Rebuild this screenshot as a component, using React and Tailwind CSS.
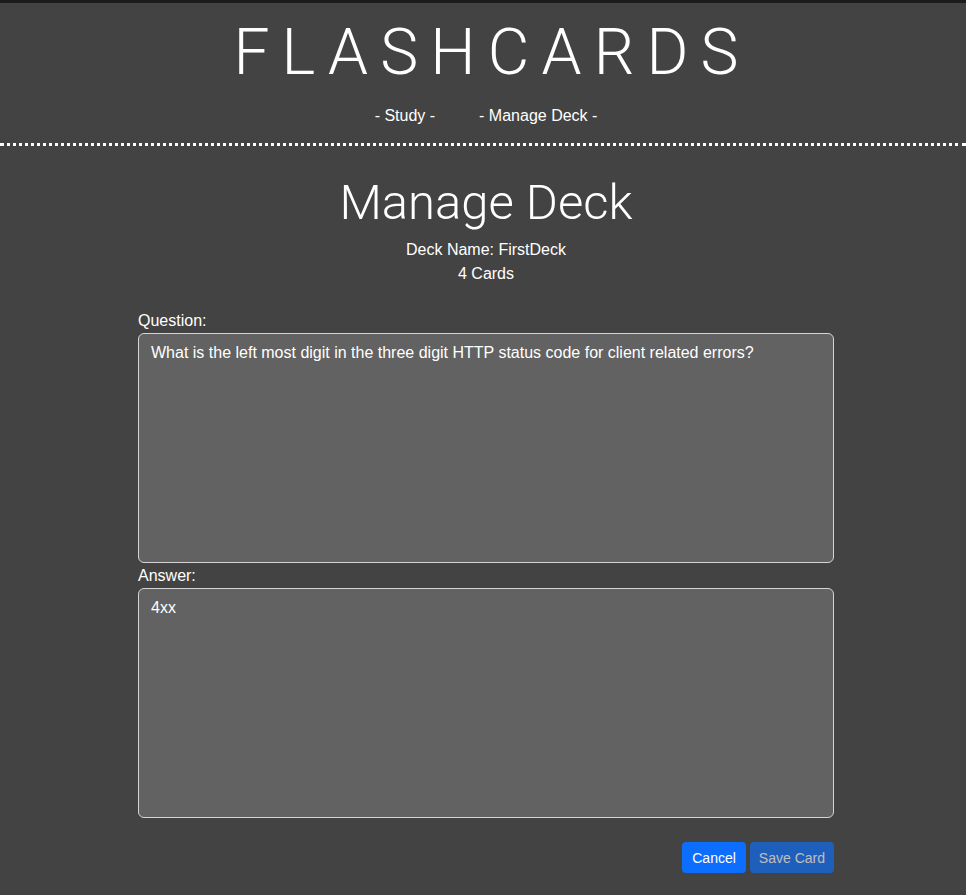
export default function App() {
  const card = {
    question:
      'What is the left most digit in the three digit HTTP status code for client related errors?',
    answer: '4xx',
  };

  return (
    <div className="min-h-[895px] bg-[#434343] text-white font-['Liberation_Sans',sans-serif] border-t-[3px] border-[#1c1c1e]">
      <header className="pl-[6px] border-b-[3px] border-dotted border-white pb-[16px]">
        <h1 className="pt-[12px] text-center text-[64px] leading-[76px] font-light tracking-[0.19em] pl-[0.19em] font-['Roboto',sans-serif]">
          FLASHCARDS
        </h1>
        <nav className="mt-[13px] mb-[-1px] flex justify-center gap-[44px] text-base leading-6">
          <a href="#" className="text-white">- Study -</a>
          <a href="#" className="text-white">- Manage Deck -</a>
        </nav>
      </header>

      <main className="pl-[6px]">
        <div className="w-[696px] mx-auto">
          <h2 className="mt-[27px] text-center text-[49px] leading-[59px] font-light font-['Roboto',sans-serif]">
            Manage Deck
          </h2>
          <div className="mt-[6px] text-center text-base leading-6">
            <p>Deck Name: FirstDeck</p>
            <p>4 Cards</p>
          </div>

          <form className="mt-[23px]">
            <label className="block text-base leading-6">Question:</label>
            <textarea
              readOnly
              value={card.question}
              className="block w-full h-[230px] resize-none rounded-[6px] border border-[#d4d4d4] bg-[#626262] px-3 py-[7px] text-base leading-6 text-white outline-none"
            />
            <label className="block mt-[1px] text-base leading-6">Answer:</label>
            <textarea
              readOnly
              value={card.answer}
              className="block w-full h-[230px] resize-none rounded-[6px] border border-[#d4d4d4] bg-[#626262] px-3 py-[7px] text-base leading-6 text-white outline-none"
            />
            <div className="mt-[24px] flex justify-end gap-1">
              <button type="button" className="h-[31px] px-[10px] rounded-[4px] bg-[#0d6efd] text-sm text-white">
                Cancel
              </button>
              <button type="button" disabled className="h-[31px] px-[9px] rounded-[4px] bg-[#0d6efd] text-sm text-white opacity-65">
                Save Card
              </button>
            </div>
          </form>
        </div>
      </main>
    </div>
  );
}
